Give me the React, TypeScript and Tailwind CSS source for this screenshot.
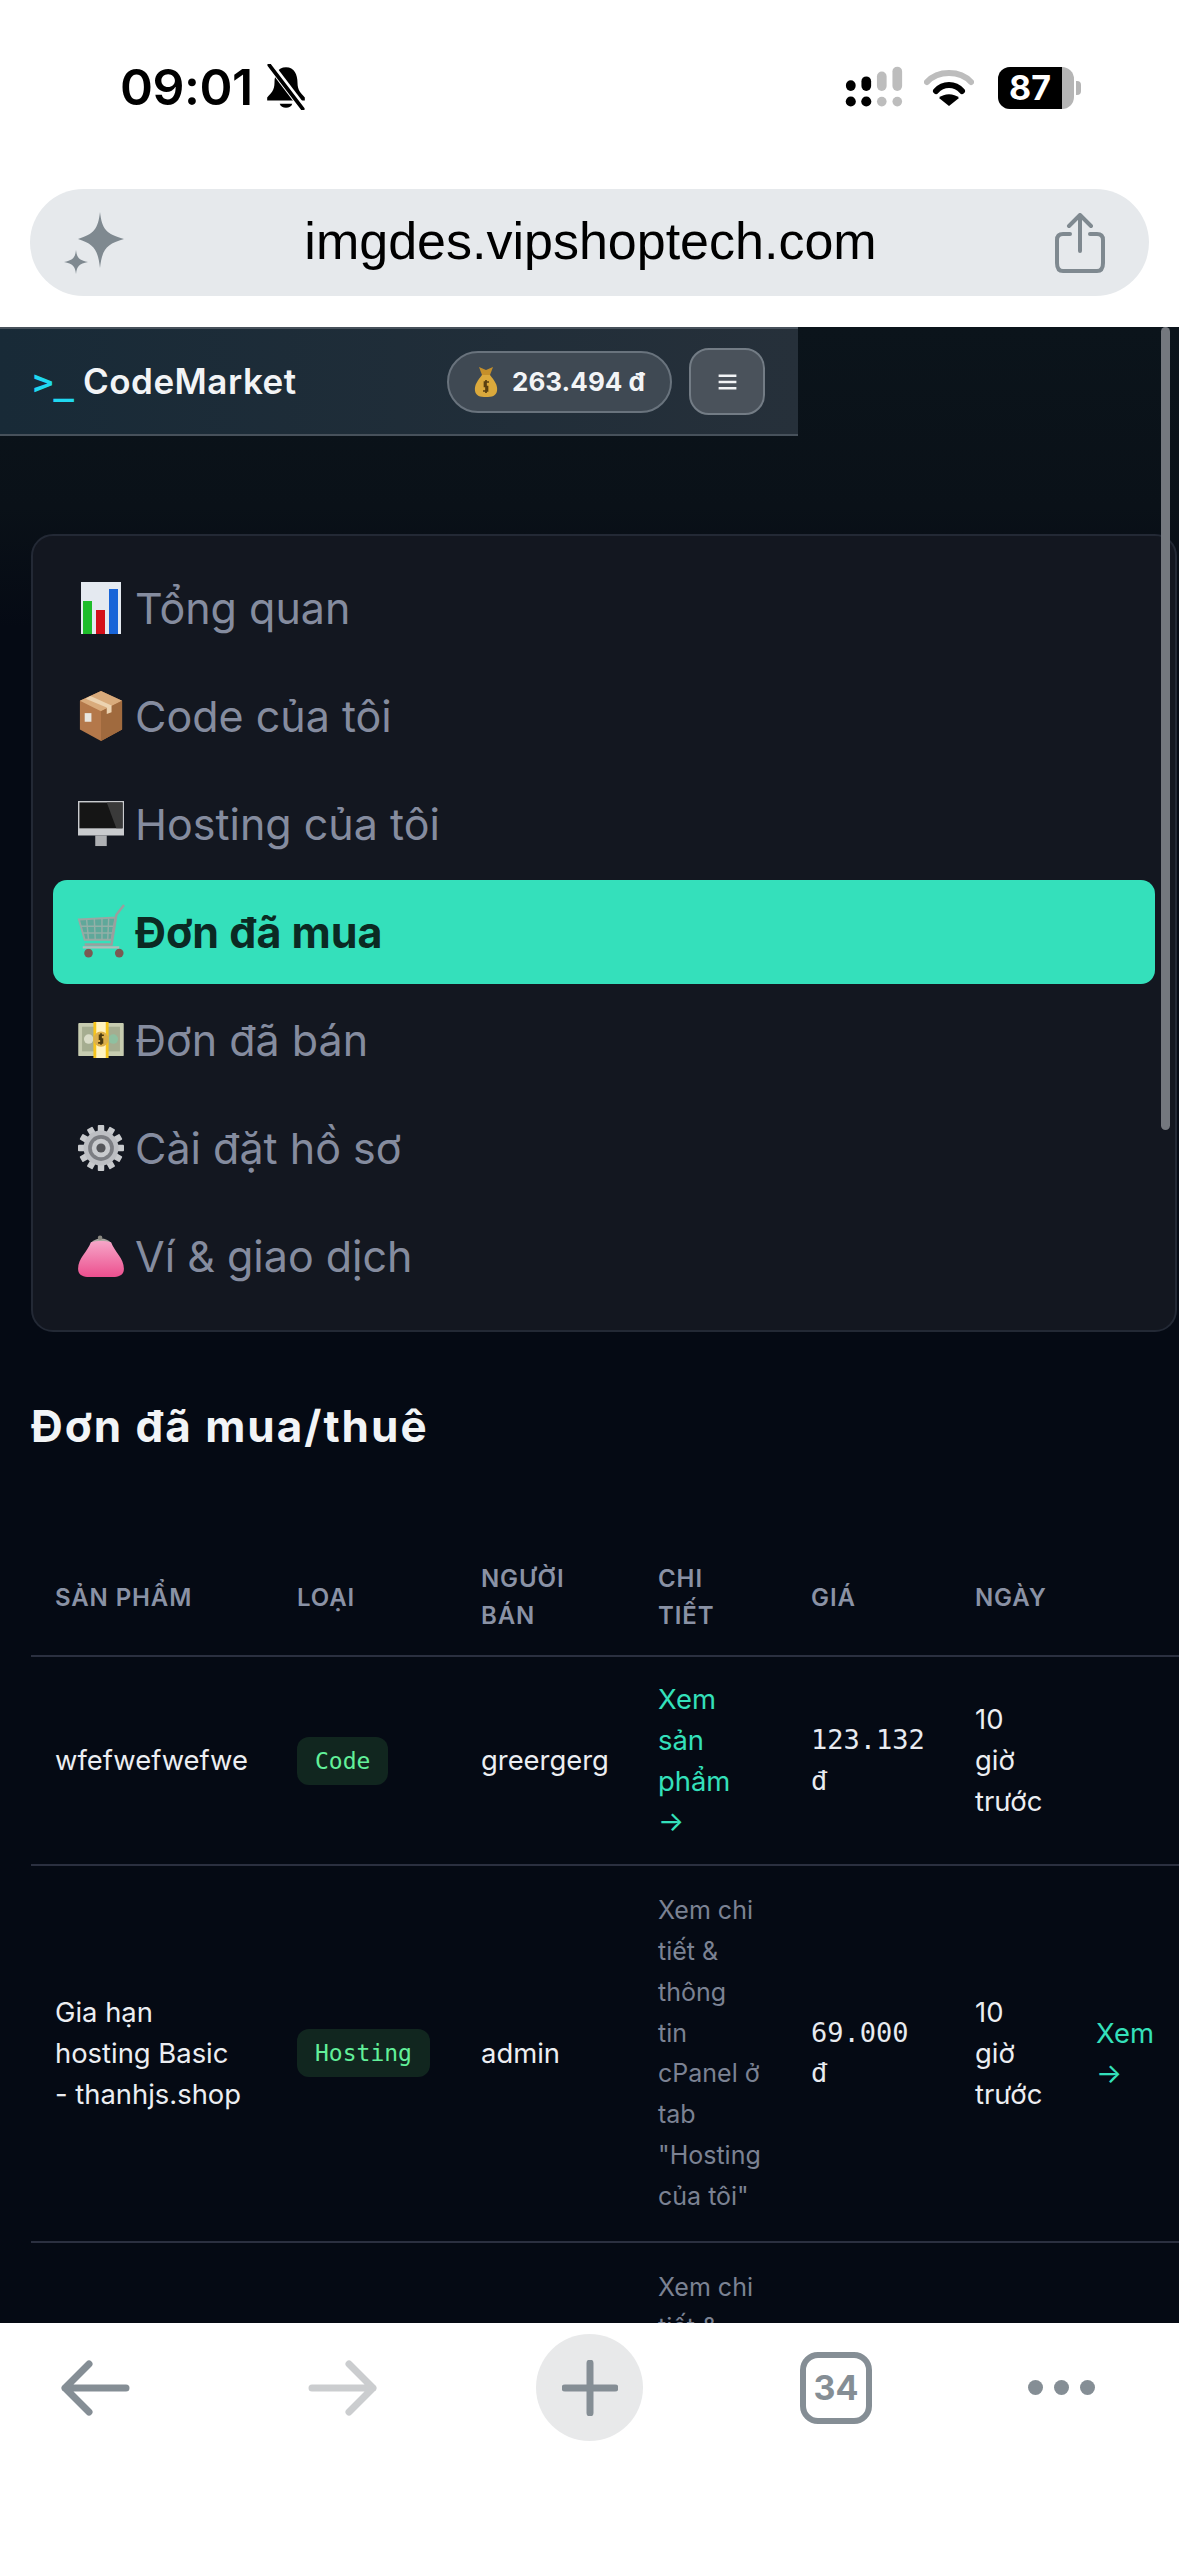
import React from "react";

const sans = "font-['Inter','Noto_Sans',sans-serif]";

function ChartIcon() {
  return (
    <svg width="48" height="52" viewBox="0 0 48 52">
      <rect x="4" y="0" width="40" height="52" fill="#e4e9f0" />
      <rect x="6" y="19" width="9" height="33" fill="#1ebd2a" />
      <rect x="19" y="28" width="9" height="24" fill="#d4101a" />
      <rect x="32" y="7" width="9" height="45" fill="#1864d8" />
    </svg>
  );
}
function BoxIcon() {
  return (
    <svg width="46" height="54" viewBox="0 0 48 54">
      <path d="M24 1 46 11V41L24 53 2 41V11Z" fill="#b4784a" />
      <path d="M24 1 46 11 24 22 2 11Z" fill="#d9ab7c" />
      <path d="M24 22 46 11V41L24 53Z" fill="#a06a3e" />
      <path d="M13 6 35 16V23L30 25V18L8 9Z" fill="#ecd3b1" />
      <rect x="7" y="24" width="7" height="9" fill="#e8e6e0" />
    </svg>
  );
}
function MonitorIcon() {
  return (
    <svg width="46" height="46" viewBox="0 0 48 48">
      <rect x="0" y="0" width="48" height="36" fill="#c9cbce" />
      <rect x="1.5" y="1.5" width="45" height="27" fill="#151515" />
      <path d="M30 1.5H46.5V28.5H40Z" fill="#3a3a3a" />
      <rect x="18" y="36" width="12" height="11" fill="#aeb0b3" />
    </svg>
  );
}
function CartIcon() {
  return (
    <svg width="48" height="56" viewBox="0 0 50 58">
      <path d="M2 16 40 14 36 37H8Z" fill="#5fa89a" stroke="#9aa7a3" strokeWidth="2" />
      <path d="M10 16 12 37M18 15 19 37M26 15 26 37M33 15 32 37M4 23H38M6 30H37" stroke="#93b0a8" strokeWidth="1.5" fill="none" />
      <path d="M49 1 41 11 36 42H8" stroke="#9a9f9e" strokeWidth="2.5" fill="none" />
      <circle cx="12" cy="51" r="4.5" fill="#7a5a52" />
      <circle cx="44" cy="51" r="4.5" fill="#7a5a52" />
      <path d="M6 45H44" stroke="#b5bab8" strokeWidth="2.5" />
    </svg>
  );
}
function MoneyIcon() {
  return (
    <svg width="46" height="36" viewBox="0 0 48 38">
      <rect x="0" y="1" width="48" height="35" rx="1" fill="#c7ccb0" />
      <rect x="4" y="5" width="40" height="26" fill="#a5ad90" />
      <circle cx="11" cy="18" r="5" fill="#d9dcc8" />
      <circle cx="37" cy="18" r="5" fill="#8fc0a0" />
      <rect x="16" y="0" width="16" height="38" fill="#f7c51c" />
      <rect x="19" y="0" width="10" height="38" fill="#fff3c0" />
      <circle cx="24" cy="18" r="8" fill="#ddb04a" />
      <path d="M27 14H22.5V18H25.5V22H21M24 12V24" stroke="#4a3a10" strokeWidth="1.8" fill="none" />
    </svg>
  );
}
function GearIcon() {
  return (
    <svg width="46" height="48" viewBox="0 0 50 52">
      <g transform="translate(25 26)">
        {[0, 30, 60, 90, 120, 150, 180, 210, 240, 270, 300, 330].map((a) => (
          <rect key={a} x="-3.5" y="-25" width="7" height="10" rx="1" fill="#c8cacd" transform={`rotate(${a})`} />
        ))}
        <circle r="19" fill="#bdbfc3" />
        <circle r="14" fill="#7c7e83" />
        <circle r="10" fill="#c9cbce" />
        <circle r="5" fill="#55565a" />
      </g>
    </svg>
  );
}
function PurseIcon() {
  return (
    <svg width="46" height="44" viewBox="0 0 50 48">
      <defs>
        <linearGradient id="pg" x1="0" y1="0" x2="0" y2="1">
          <stop offset="0" stopColor="#f6a6c8" />
          <stop offset="1" stopColor="#ec4f8e" />
        </linearGradient>
      </defs>
      <path d="M15 11C20 5 30 5 35 11" stroke="#a9a6a0" strokeWidth="3" fill="none" />
      <circle cx="24" cy="4" r="2.5" fill="#8a8880" />
      <path d="M14 9C20 7 30 7 36 9 40 20 50 26 50 38 50 45 44 47 38 47H12C6 47 0 45 0 38 0 26 10 20 14 9Z" fill="url(#pg)" />
    </svg>
  );
}
function BagIcon() {
  return (
    <svg width="24" height="32" viewBox="0 0 24 32">
      <path d="M5 1 12 4 19 1 16 9H8Z" fill="#c58f2a" />
      <path d="M8 9H16C20 14 24 19 23 25 22 30 18 31 12 31 6 31 2 30 1 25 0 19 4 14 8 9Z" fill="#dba93c" />
      <path d="M15 16H10.5V20.5H13.5V25H9M12 14V27" stroke="#5a3f10" strokeWidth="1.7" fill="none" />
    </svg>
  );
}

const nav: { icon: React.ReactNode; label: string; active?: boolean }[] = [
  { icon: <ChartIcon />, label: "Tổng quan" },
  { icon: <BoxIcon />, label: "Code của tôi" },
  { icon: <MonitorIcon />, label: "Hosting của tôi" },
  { icon: <CartIcon />, label: "Đơn đã mua", active: true },
  { icon: <MoneyIcon />, label: "Đơn đã bán" },
  { icon: <GearIcon />, label: "Cài đặt hồ sơ" },
  { icon: <PurseIcon />, label: "Ví & giao dịch" },
];

function Badge({ children }: { children: React.ReactNode }) {
  return (
    <span className="inline-block rounded-[12px] bg-[#11261f] px-[18px] py-[6px] font-['DejaVu_Sans_Mono','Liberation_Mono',monospace] text-[23px] leading-[36px] text-[#62f09a]">
      {children}
    </span>
  );
}

const td = "px-[24px] py-[24px] align-middle leading-[40.8px]";
const th = "px-[24px] pb-[21px] pt-[27px] text-left align-middle text-[24px] font-semibold uppercase leading-[37px] tracking-[0.9px] text-[#8a92a5]";
const price = `${td} font-['DejaVu_Sans_Mono','Liberation_Mono',monospace] text-[27px] text-[#e8ebf0]`;
const rowLine = "border-b-[2px] border-b-[#2b3040]";

export default function App() {
  return (
    <div className={`flex h-[2556px] w-[1179px] flex-col overflow-hidden bg-white ${sans}`}>
      {/* Phone status bar and address bar */}
      <div className="h-[327px] shrink-0 bg-white">
        <div className="flex h-[189px] items-start justify-between pl-[120px] pr-[98px] pt-[55px]">
          <div className="flex items-center gap-[11px]">
            <span className="text-[50px] font-semibold leading-[64px] tracking-[-0.5px] text-black">09:01</span>
            <svg width="44" height="46" viewBox="0 0 42 44">
              <path d="M21 3C13 3 10 10 10 18 10 25 7 28 3 32V35H39V32C35 28 32 25 32 18 32 10 29 3 21 3Z" fill="#000" />
              <path d="M15 38C16 43 26 43 27 38Z" fill="#000" />
              <path d="M6 1 38 43" stroke="#fff" strokeWidth="7" />
              <path d="M5 1 37 43" stroke="#000" strokeWidth="3.5" strokeLinecap="round" />
            </svg>
          </div>
          <div className="flex items-center pt-[11px]">
            <svg width="62" height="44" viewBox="0 0 64 44">
              <rect x="2" y="14" width="10" height="11" rx="5" fill="#000" />
              <rect x="18" y="10" width="10" height="15" rx="5" fill="#000" />
              <rect x="34" y="5" width="10" height="20" rx="5" fill="#bdbdbd" />
              <rect x="50" y="0" width="10" height="25" rx="5" fill="#bdbdbd" />
              <circle cx="7" cy="36" r="5.2" fill="#000" />
              <circle cx="23" cy="36" r="5.2" fill="#000" />
              <circle cx="39" cy="36" r="5" fill="#bdbdbd" />
              <circle cx="55" cy="36" r="5" fill="#bdbdbd" />
            </svg>
            <svg className="ml-[18px]" width="50" height="38" viewBox="0 0 50 38">
              <path d="M3 13C14 1 36 1 47 13" stroke="#bdbdbd" strokeWidth="6" fill="none" strokeLinecap="round" />
              <path d="M12 22C19 14 31 14 38 22" stroke="#000" strokeWidth="6" fill="none" strokeLinecap="round" />
              <path d="M25 37 15 29C20 24 30 24 35 29Z" fill="#000" />
            </svg>
            <div className="ml-[24px] flex items-center">
              <div className="flex h-[42px] w-[76px] items-center overflow-hidden rounded-[12px] bg-[#b5b5b5]">
                <div className="flex h-full w-[64px] items-center justify-center bg-black text-[34px] font-bold leading-none text-white">87</div>
              </div>
              <div className="ml-[2px] h-[14px] w-[5px] rounded-r-[4px] bg-[#b5b5b5]" />
            </div>
          </div>
        </div>
        <div className="mx-[30px] flex h-[107px] items-center justify-between rounded-[54px] bg-[#e6e9ec] pl-[34px] pr-[44px]">
          <svg width="62" height="62" viewBox="0 0 62 62">
            <path d="M36 0C38 17 42 22 60 27 42 32 38 38 36 56 34 38 30 32 14 27 30 22 34 17 36 0Z" fill="#7f8990" />
            <path d="M12 38C13 46 15 48 24 50 15 52 13 54 12 62 11 54 9 52 0 50 9 48 11 46 12 38Z" fill="#7f8990" />
          </svg>
          <span className="pb-[4px] font-['Liberation_Sans',sans-serif] text-[52px] leading-none text-black">imgdes.vipshoptech.com</span>
          <svg width="50" height="60" viewBox="0 0 50 60" fill="none" stroke="#7f8990" strokeWidth="4" strokeLinecap="round" strokeLinejoin="round">
            <path d="M25 38V3M14 13 25 2 36 13" />
            <path d="M15 21H8C4 21 2 23 2 27V50C2 55 4 58 8 58H42C46 58 48 55 48 50V27C48 23 46 21 42 21H35" />
          </svg>
        </div>
      </div>

      {/* Web page */}
      <div className="relative flex-1 overflow-hidden bg-[linear-gradient(180deg,#0b141b_0px,#0a1118_180px,#050a14_300px)]">
        <div className="absolute right-[9px] top-0 h-[803px] w-[9px] rounded-[5px] bg-[#74787e]" />

        <header className="flex h-[109px] w-[798px] items-center justify-between border-y-[2px] border-y-[#47515b] bg-[linear-gradient(90deg,#182a37,#26303a)] pl-[33px] pr-[33px]">
          <div className="flex items-center gap-[9px]">
            <span className="font-['DejaVu_Sans_Mono',monospace] text-[34px] font-bold leading-none text-[#20d8f0]">&gt;_</span>
            <span className="text-[35px] font-semibold leading-none tracking-[0.5px] text-[#f2f4f6]">CodeMarket</span>
          </div>
          <div className="flex items-center gap-[17px]">
            <div className="flex h-[62px] w-[225px] items-center justify-center gap-[14px] rounded-[31px] border-[2px] border-[#69737d] bg-[#3f4953]">
              <BagIcon />
              <span className="text-[26px] font-bold leading-none text-[#f2f4f6]">263.494 đ</span>
            </div>
            <div className="flex h-[67px] w-[76px] items-center justify-center rounded-[20px] border-[2px] border-[#737c85] bg-[#4a525b]">
              <svg width="19" height="16" viewBox="0 0 20 18">
                <path d="M0 2H20M0 9H20M0 16H20" stroke="#f2f4f6" strokeWidth="2.8" />
              </svg>
            </div>
          </div>
        </header>

        <nav className="ml-[31px] mt-[98px] flex w-[1146px] flex-col gap-[4px] rounded-[22px] border-[2px] border-[#232935] bg-[#131720] pb-[22px] pl-[20px] pr-[20px] pt-[20px]">
          {nav.map((n) => (
            <div
              key={n.label}
              className={`flex h-[104px] items-center rounded-[14px] pl-[22px] text-[43px] leading-none ${n.active ? "bg-[#34e0bb] font-bold text-[#0b2a23]" : "text-[#858c9f]"}`}
            >
              <span className="flex w-[52px] items-center justify-center">{n.icon}</span>
              <span className="ml-[8px]">{n.label}</span>
            </div>
          ))}
        </nav>

        <h2 className="ml-[31px] mt-[67px] text-[44px] font-bold leading-[54px] tracking-[2px] text-[#f2f4f6]">Đơn đã mua/thuê</h2>

        <table className="ml-[31px] mt-[80px] w-[1240px] table-fixed border-collapse text-[27.4px] text-[#eceef2]">
          <colgroup>
            <col className="w-[242px]" />
            <col className="w-[184px]" />
            <col className="w-[177px]" />
            <col className="w-[153px]" />
            <col className="w-[164px]" />
            <col className="w-[121px]" />
            <col className="w-[199px]" />
          </colgroup>
          <thead>
            <tr className={rowLine}>
              <th className={th}>Sản phẩm</th>
              <th className={th}>Loại</th>
              <th className={th}>Người bán</th>
              <th className={th}>Chi tiết</th>
              <th className={th}>Giá</th>
              <th className={th}>Ngày</th>
              <th className={th}></th>
            </tr>
          </thead>
          <tbody>
            <tr className={rowLine}>
              <td className={td}>wfefwefwefwe</td>
              <td className={td}><Badge>Code</Badge></td>
              <td className={td}>greergerg</td>
              <td className="px-[24px] py-[22px] align-middle leading-[40.8px] text-[#34e0bb]">Xem<br />sản<br />phẩm<br />→</td>
              <td className={price}>123.132 đ</td>
              <td className={td}>10 giờ trước</td>
              <td className={td}></td>
            </tr>
            <tr className={rowLine}>
              <td className={td}>Gia hạn<br />hosting Basic<br />- thanhjs.shop</td>
              <td className={td}><Badge>Hosting</Badge></td>
              <td className={td}>admin</td>
              <td className={`${td} whitespace-nowrap text-[25px] text-[#7b8293]`}>Xem chi<br />tiết &amp;<br />thông<br />tin<br />cPanel ở<br />tab<br />"Hosting<br />của tôi"</td>
              <td className={price}>69.000 đ</td>
              <td className={td}>10 giờ trước</td>
              <td className={`${td} text-[#34e0bb]`}>Xem<br />→</td>
            </tr>
            <tr>
              <td className={td}></td>
              <td className={td}></td>
              <td className={td}></td>
              <td className={`${td} whitespace-nowrap text-[25px] text-[#7b8293]`}>Xem chi<br />tiết &amp;</td>
              <td className={td}></td>
              <td className={td}></td>
              <td className={td}></td>
            </tr>
          </tbody>
        </table>
      </div>

      {/* Browser toolbar */}
      <div className="relative z-10 flex h-[233px] shrink-0 items-start bg-white pt-[11px]">
        <div className="flex h-[107px] w-[190px] items-center justify-center">
          <svg width="70" height="56" viewBox="0 0 70 56" fill="none" stroke="#858e95" strokeWidth="7" strokeLinecap="round" strokeLinejoin="round">
            <path d="M66 28H5M29 4 5 28 29 52" />
          </svg>
        </div>
        <div className="flex h-[107px] w-[306px] items-center justify-center">
          <svg width="70" height="56" viewBox="0 0 70 56" fill="none" stroke="#cbcdcf" strokeWidth="7" strokeLinecap="round" strokeLinejoin="round">
            <path d="M4 28H65M41 4 65 28 41 52" />
          </svg>
        </div>
        <div className="ml-[40px] flex h-[107px] w-[107px] items-center justify-center rounded-full bg-[#e8e9ea]">
          <svg width="56" height="56" viewBox="0 0 56 56" fill="none" stroke="#858e95" strokeWidth="7" strokeLinecap="round">
            <path d="M28 3V53M3 28H53" />
          </svg>
        </div>
        <div className="ml-[157px] mt-[18px] flex h-[72px] w-[72px] items-center justify-center rounded-[18px] border-[6px] border-[#858e95] text-[34px] font-bold leading-none text-[#858e95]">34</div>
        <div className="ml-[156px] mt-[46px] flex gap-[11px]">
          <span className="h-[15px] w-[15px] rounded-full bg-[#858e95]" />
          <span className="h-[15px] w-[15px] rounded-full bg-[#858e95]" />
          <span className="h-[15px] w-[15px] rounded-full bg-[#858e95]" />
        </div>
      </div>
    </div>
  );
}
